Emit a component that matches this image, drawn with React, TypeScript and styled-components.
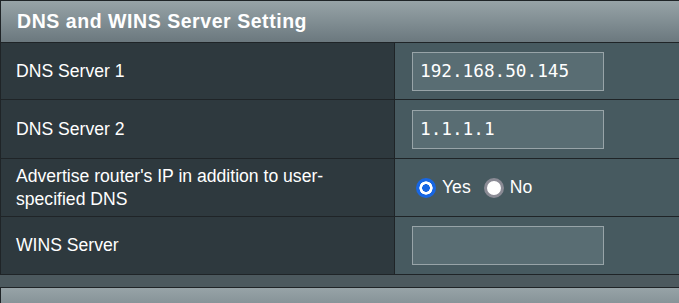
import React from "react";
import styled, { createGlobalStyle } from "styled-components";

const Global = createGlobalStyle`
  html, body { margin: 0; padding: 0; }
  body {
    background: #4c595e;
    font-family: "Liberation Sans", Arial, sans-serif;
    overflow: hidden;
  }
`;

const Page = styled.div`
  width: 690px;
  display: flex;
  flex-direction: column;
  gap: 12px;
`;

const Table = styled.div`
  border-top: 1px solid #1f2427;
  border-left: 1px solid #1f2427;
  display: flex;
  flex-direction: column;
`;

const Header = styled.div`
  height: 41px;
  border-bottom: 1px solid #1f2427;
  background: linear-gradient(to bottom, #97a3a7 0%, #818e93 50%, #6b787e 100%);
  display: flex;
  align-items: center;
  padding-left: 16px;
  color: #fff;
  font-weight: bold;
  font-size: 19.5px;
  letter-spacing: 0.55px;
`;

const Row = styled.div<{ $h: number }>`
  display: grid;
  grid-template-columns: 394px 1fr;
  height: ${(p) => p.$h}px;
  border-bottom: 1px solid #1f2427;
`;

const Label = styled.div`
  background: #2e393e;
  border-right: 1px solid #1f2427;
  color: #fff;
  font-size: 17.6px;
  line-height: 22.5px;
  display: flex;
  align-items: center;
  padding: 0 30px 0 15px;
`;

const Value = styled.div`
  background: #475a60;
  display: flex;
  align-items: center;
  padding-left: 17px;
`;

const TextInput = styled.input`
  box-sizing: border-box;
  width: 192px;
  height: 39px;
  background: #596d73;
  border: 1px solid #98a4a8;
  border-radius: 0;
  color: #fff;
  font-family: "DejaVu Sans Mono", monospace;
  font-size: 17.7px;
  padding: 0 0 0 7px;
  outline: none;
`;

const RadioGroup = styled.div`
  display: flex;
  align-items: center;
  color: #fff;
  font-size: 17.6px;
  padding-left: 4px;
`;

const RadioLabel = styled.label`
  display: flex;
  align-items: center;
  gap: 6px;
  margin-right: 13px;
`;

const Radio = styled.input`
  appearance: none;
  flex-shrink: 0;
  margin: 0;
  width: 20px;
  height: 20px;
  border-radius: 50%;
  box-sizing: border-box;
  background: #fff;
  border: 3px solid #8b8b95;
  &:checked {
    border: none;
    background: radial-gradient(
      circle,
      #1766e3 0 3.6px,
      #fff 4px 6.4px,
      #1766e3 6.8px
    );
  }
`;

export default function App() {
  return (
    <>
      <Global />
      <Page>
        <Table>
          <Header>DNS and WINS Server Setting</Header>
          <Row $h={56}>
            <Label>DNS Server 1</Label>
            <Value>
              <TextInput defaultValue="192.168.50.145" />
            </Value>
          </Row>
          <Row $h={58}>
            <Label>DNS Server 2</Label>
            <Value>
              <TextInput defaultValue="1.1.1.1" />
            </Value>
          </Row>
          <Row $h={57}>
            <Label>Advertise router's IP in addition to user-specified DNS</Label>
            <Value>
              <RadioGroup>
                <RadioLabel>
                  <Radio type="radio" name="adv" defaultChecked />
                  Yes
                </RadioLabel>
                <RadioLabel>
                  <Radio type="radio" name="adv" />
                  No
                </RadioLabel>
              </RadioGroup>
            </Value>
          </Row>
          <Row $h={57}>
            <Label>WINS Server</Label>
            <Value>
              <TextInput defaultValue="" />
            </Value>
          </Row>
        </Table>
        <Table>
          <Header />
        </Table>
      </Page>
    </>
  );
}
